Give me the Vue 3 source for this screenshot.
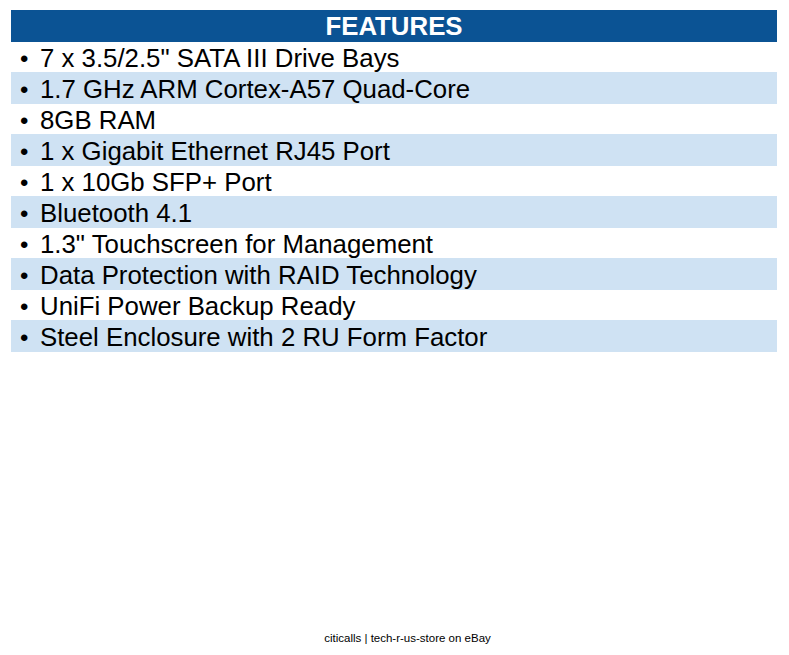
<script setup>
const features = [
  '7 x 3.5/2.5" SATA III Drive Bays',
  '1.7 GHz ARM Cortex-A57 Quad-Core',
  '8GB RAM',
  '1 x Gigabit Ethernet RJ45 Port',
  '1 x 10Gb SFP+ Port',
  'Bluetooth 4.1',
  '1.3" Touchscreen for Management',
  'Data Protection with RAID Technology',
  'UniFi Power Backup Ready',
  'Steel Enclosure with 2 RU Form Factor',
]
</script>

<template>
  <div class="page">
    <section class="features">
      <h1 class="title">FEATURES</h1>
      <ul class="list">
        <li v-for="f in features" :key="f" class="row">
          <span class="bullet">•</span><span>{{ f }}</span>
        </li>
      </ul>
    </section>
    <footer class="foot">citicalls | tech-r-us-store on eBay</footer>
  </div>
</template>

<style>
html, body { margin: 0; background: #fff; }
</style>

<style scoped>
.page {
  height: 655px;
  box-sizing: border-box;
  padding: 10px 12px 0 11px;
  display: flex;
  flex-direction: column;
  font-family: "Liberation Sans", Arial, sans-serif;
  color: #000;
}
.features { flex: 1; }
.title {
  margin: 0;
  height: 32px;
  line-height: 33px;
  background: #0b5394;
  color: #fff;
  text-align: center;
  font-size: 25.8px;
  font-weight: 700;
}
.list { margin: 0; padding: 0; list-style: none; }
.row {
  height: 30px;
  line-height: 33px;
  font-size: 25.8px;
  padding-left: 9px;
  display: flex;
}
.row:nth-child(even) {
  height: 32px;
  line-height: 35px;
  background: #cfe2f3;
}
.bullet { width: 20px; font-size: 24px; }
.foot {
  text-align: center;
  font-size: 11.5px;
  line-height: 14px;
  padding: 0 0 10px 27px;
}
</style>
